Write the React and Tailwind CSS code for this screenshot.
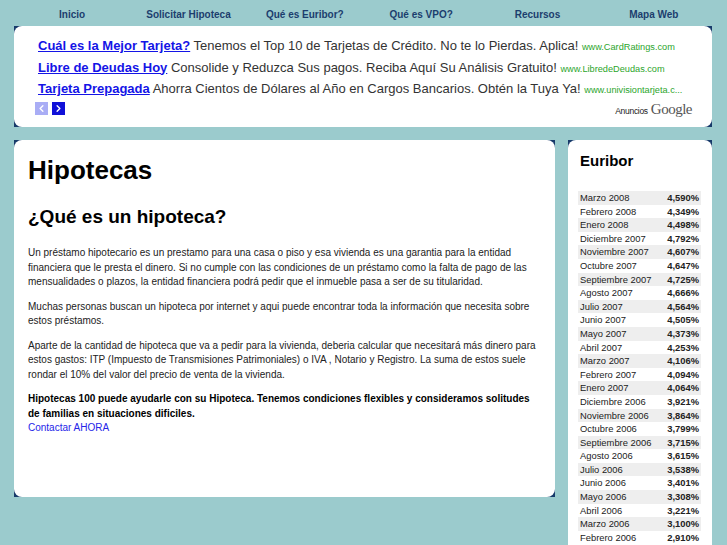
import React from 'react';
import { ChevronLeft, ChevronRight } from 'lucide-react';

const navItems = ['Inicio', 'Solicitar Hipoteca', 'Qué es Euribor?', 'Qué es VPO?', 'Recursos', 'Mapa Web'];

const ads = [
  {
    title: 'Cuál es la Mejor Tarjeta?',
    text: 'Tenemos el Top 10 de Tarjetas de Crédito. No te lo Pierdas. Aplica!',
    url: 'www.CardRatings.com',
  },
  {
    title: 'Libre de Deudas Hoy',
    text: 'Consolide y Reduzca Sus pagos. Reciba Aquí Su Análisis Gratuito!',
    url: 'www.LibredeDeudas.com',
  },
  {
    title: 'Tarjeta Prepagada',
    text: 'Ahorra Cientos de Dólares al Año en Cargos Bancarios. Obtén la Tuya Ya!',
    url: 'www.univisiontarjeta.c...',
  },
];

const euribor = [
  ['Marzo 2008', '4,590%'],
  ['Febrero 2008', '4,349%'],
  ['Enero 2008', '4,498%'],
  ['Diciembre 2007', '4,792%'],
  ['Noviembre 2007', '4,607%'],
  ['Octubre 2007', '4,647%'],
  ['Septiembre 2007', '4,725%'],
  ['Agosto 2007', '4,666%'],
  ['Julio 2007', '4,564%'],
  ['Junio 2007', '4,505%'],
  ['Mayo 2007', '4,373%'],
  ['Abril 2007', '4,253%'],
  ['Marzo 2007', '4,106%'],
  ['Febrero 2007', '4,094%'],
  ['Enero 2007', '4,064%'],
  ['Diciembre 2006', '3,921%'],
  ['Noviembre 2006', '3,864%'],
  ['Octubre 2006', '3,799%'],
  ['Septiembre 2006', '3,715%'],
  ['Agosto 2006', '3,615%'],
  ['Julio 2006', '3,538%'],
  ['Junio 2006', '3,401%'],
  ['Mayo 2006', '3,308%'],
  ['Abril 2006', '3,221%'],
  ['Marzo 2006', '3,100%'],
  ['Febrero 2006', '2,910%'],
];

// navy square behind a rounded white panel gives the dark corner marks
function Panel({ className = '', children }) {
  return (
    <div className={`bg-[#173a6a] ${className}`}>
      <div className="bg-white rounded-[8px] h-full">{children}</div>
    </div>
  );
}

function App() {
  return (
    <div
      className="w-full h-[545px] overflow-hidden bg-[#9bcbcd] text-[#222]"
      style={{ fontFamily: '"Liberation Sans", Arial, sans-serif' }}
    >
      <div className="ml-[14px] w-[698px]">
        <nav className="grid grid-cols-6 h-[26px] items-center pt-[2px]">
          {navItems.map((item) => (
            <a key={item} href="#" className="text-center text-[10px] font-bold text-[#1c3e6e]">
              {item}
            </a>
          ))}
        </nav>

        <Panel className="h-[101px]">
          <div className="pt-[9px]">
            {ads.map((ad) => (
              <div key={ad.title} className="pl-[24px] h-[21.5px] leading-[21.5px] text-[13px] whitespace-nowrap">
                <a href="#" className="font-bold underline text-[#1414e6]">
                  {ad.title}
                </a>{' '}
                <span className="text-[#333]">{ad.text}</span>{' '}
                <span className="text-[9.2px] leading-none text-[#2ba52b]">{ad.url}</span>
              </div>
            ))}
            <div className="flex items-center justify-between pl-[21px] pr-[20px] -mt-[2px]">
              <div className="flex gap-[4px]">
                <span className="w-[13px] h-[13px] bg-[#a9adf5] flex items-center justify-center">
                  <ChevronLeft size={11} strokeWidth={3} color="#fff" />
                </span>
                <span className="w-[13px] h-[13px] bg-[#1010d8] flex items-center justify-center">
                  <ChevronRight size={11} strokeWidth={3} color="#fff" />
                </span>
              </div>
              <div className="flex items-baseline gap-[3px]">
                <span className="text-[8.5px] text-[#222] tracking-[-0.3px]">Anuncios</span>
                <span
                  className="text-[15px] text-[#555] tracking-[-0.5px]"
                  style={{ fontFamily: '"Liberation Serif", serif' }}
                >
                  Google
                </span>
              </div>
            </div>
          </div>
        </Panel>

        <div className="flex gap-[13px] mt-[13px]">
          <Panel className="w-[541px] h-[357px]">
            <div className="pl-[14px] pr-[13px] pt-[14px]">
              <h1 className="text-[26px] font-bold text-black leading-[32px]">Hipotecas</h1>
              <h2 className="text-[19px] font-bold text-black leading-[24px] mt-[19px]">¿Qué es un hipoteca?</h2>
              <div className="text-[10px] leading-[14.5px] mt-[17px]">
                <p className="mb-[10px]">
                  Un préstamo hipotecario es un prestamo para una casa o piso y esa vivienda es una garantia para la entidad
                  financiera que le presta el dinero. Si no cumple con las condiciones de un préstamo como la falta de pago de las
                  mensualidades o plazos, la entidad financiera podrá pedir que el inmueble pasa a ser de su titularidad.
                </p>
                <p className="mb-[10px]">
                  Muchas personas buscan un hipoteca por internet y aqui puede encontrar toda la información que necesita sobre
                  estos préstamos.
                </p>
                <p className="mb-[10px]">
                  Aparte de la cantidad de hipoteca que va a pedir para la vivienda, deberia calcular que necesitará más dinero para
                  estos gastos: ITP (Impuesto de Transmisiones Patrimoniales) o IVA , Notario y Registro. La suma de estos suele
                  rondar el 10% del valor del precio de venta de la vivienda.
                </p>
                <p className="font-bold text-black">
                  Hipotecas 100 puede ayudarle con su Hipoteca. Tenemos condiciones flexibles y consideramos solitudes de familias
                  en situaciones dificiles.
                </p>
                <a href="#" className="text-[#2525e8]">
                  Contactar AHORA
                </a>
              </div>
            </div>
          </Panel>

          <Panel className="w-[144px] h-[460px]">
            <div className="pt-[11px] pl-[10px] pr-[11px]">
              <h3 className="text-[15px] font-bold text-black leading-[20px] pl-[2px]">Euribor</h3>
              <table className="w-full mt-[20px] text-[9.4px] border-collapse">
                <tbody>
                  {euribor.map(([month, value], i) => (
                    <tr key={month} className={i % 2 === 0 ? 'bg-[#eeeeee] h-[13.6px]' : 'h-[13.6px]'}>
                      <td className="pl-[2px] py-0 leading-[13.6px]">{month}</td>
                      <td className="pr-[2px] py-0 text-right font-bold leading-[13.6px]">{value}</td>
                    </tr>
                  ))}
                </tbody>
              </table>
            </div>
          </Panel>
        </div>
      </div>
    </div>
  );
}

export default App;
